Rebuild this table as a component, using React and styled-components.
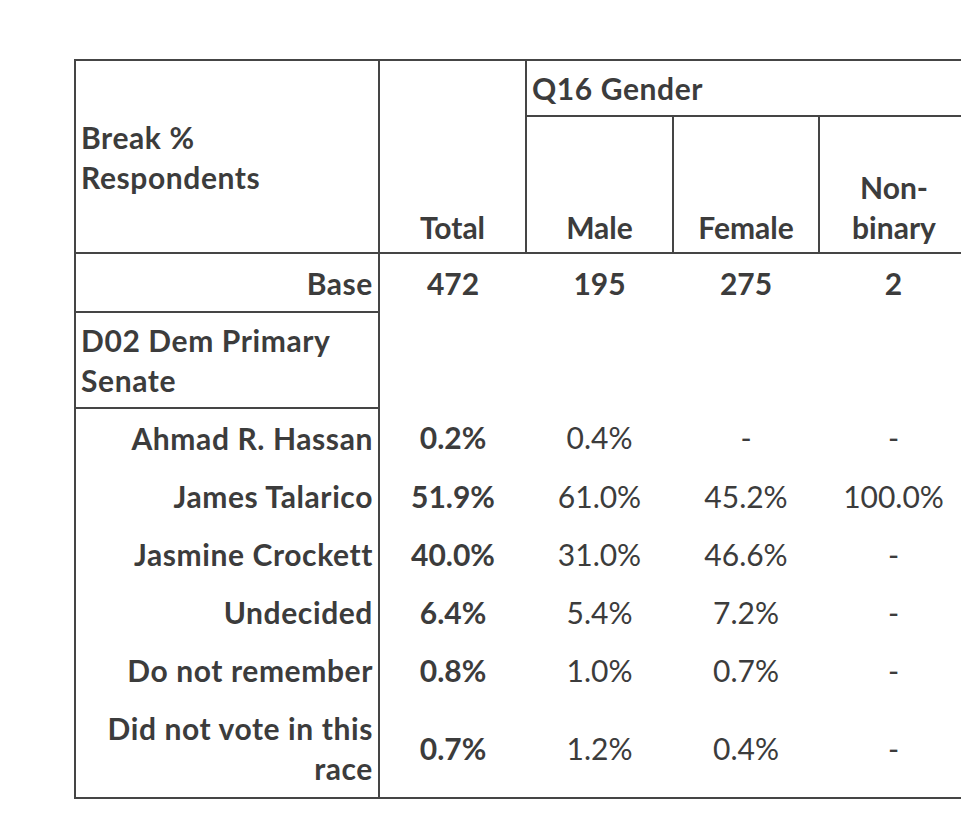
import { createGlobalStyle, styled } from "styled-components";

const GlobalStyle = createGlobalStyle`
  html, body {
    margin: 0;
    padding: 0;
    background: #ffffff;
    overflow: hidden;
  }
  body {
    font-family: Lato, "Open Sans", sans-serif;
    color: #3c3c3c;
  }
`;

const Page = styled.div`
  width: 961px;
  height: 833px;
  overflow: hidden;
  box-sizing: border-box;
  padding: 59px 0 0 74px;
`;

const Grid = styled.table`
  border-collapse: collapse;
  table-layout: fixed;
  width: 893px;
  font-size: 30px;
  line-height: 40px;
`;

const line = "2px solid #454545";

const Cell = styled.td`
  padding: ${(p) => (p.$valign === "bottom" ? "0 5px 5px 5px" : "0 5px")};
  text-align: ${(p) => p.$align || "center"};
  vertical-align: ${(p) => p.$valign || "middle"};
  font-weight: ${(p) => (p.$bold ? 700 : 400)};
  letter-spacing: ${(p) => (p.$label ? "0.6px" : "0")};
  border-top: ${(p) => (p.$b && p.$b.includes("t") ? line : "none")};
  border-right: ${(p) => (p.$b && p.$b.includes("r") ? line : "none")};
  border-bottom: ${(p) => (p.$b && p.$b.includes("b") ? line : "none")};
  border-left: ${(p) => (p.$b && p.$b.includes("l") ? line : "none")};
  white-space: nowrap;
`;

const Row = styled.tr`
  height: ${(p) => p.$h}px;
`;

const candidates = [
  { name: "Ahmad R. Hassan", total: "0.2%", vals: ["0.4%", "-", "-"], h: 58 },
  { name: "James Talarico", total: "51.9%", vals: ["61.0%", "45.2%", "100.0%"], h: 59 },
  { name: "Jasmine Crockett", total: "40.0%", vals: ["31.0%", "46.6%", "-"], h: 58 },
  { name: "Undecided", total: "6.4%", vals: ["5.4%", "7.2%", "-"], h: 58 },
  { name: "Do not remember", total: "0.8%", vals: ["1.0%", "0.7%", "-"], h: 58 },
];

export default function App() {
  return (
    <Page>
      <GlobalStyle />
      <Grid>
        <colgroup>
          <col style={{ width: 304 }} />
          <col style={{ width: 147 }} />
          <col style={{ width: 147 }} />
          <col style={{ width: 146 }} />
          <col style={{ width: 149 }} />
        </colgroup>
        <tbody>
          <Row $h={56}>
            <Cell rowSpan={2} $b="tlrb" $align="left" $bold $label>
              Break %<br />Respondents
            </Cell>
            <Cell rowSpan={2} $b="trb" $valign="bottom" $bold>
              Total
            </Cell>
            <Cell colSpan={3} $b="tb" $align="left" $bold $label>
              Q16 Gender
            </Cell>
          </Row>
          <Row $h={137}>
            <Cell $b="rb" $valign="bottom" $bold>Male</Cell>
            <Cell $b="rb" $valign="bottom" $bold>Female</Cell>
            <Cell $b="b" $valign="bottom" $bold>
              Non-<br />binary
            </Cell>
          </Row>
          <Row $h={59}>
            <Cell $b="lrb" $align="right" $bold $label>Base</Cell>
            <Cell $bold>472</Cell>
            <Cell $bold>195</Cell>
            <Cell $bold>275</Cell>
            <Cell $bold>2</Cell>
          </Row>
          <Row $h={96}>
            <Cell $b="lrb" $align="left" $bold $label>
              D02 Dem Primary<br />Senate
            </Cell>
            <Cell />
            <Cell />
            <Cell />
            <Cell />
          </Row>
          {candidates.map((c) => (
            <Row key={c.name} $h={c.h}>
              <Cell $b="lr" $align="right" $bold $label>{c.name}</Cell>
              <Cell $bold>{c.total}</Cell>
              {c.vals.map((v, i) => (
                <Cell key={i}>{v}</Cell>
              ))}
            </Row>
          ))}
          <Row $h={99}>
            <Cell $b="lrb" $align="right" $bold $label>
              Did not vote in this<br />race
            </Cell>
            <Cell $b="b" $bold>0.7%</Cell>
            <Cell $b="b">1.2%</Cell>
            <Cell $b="b">0.4%</Cell>
            <Cell $b="b">-</Cell>
          </Row>
        </tbody>
      </Grid>
    </Page>
  );
}
